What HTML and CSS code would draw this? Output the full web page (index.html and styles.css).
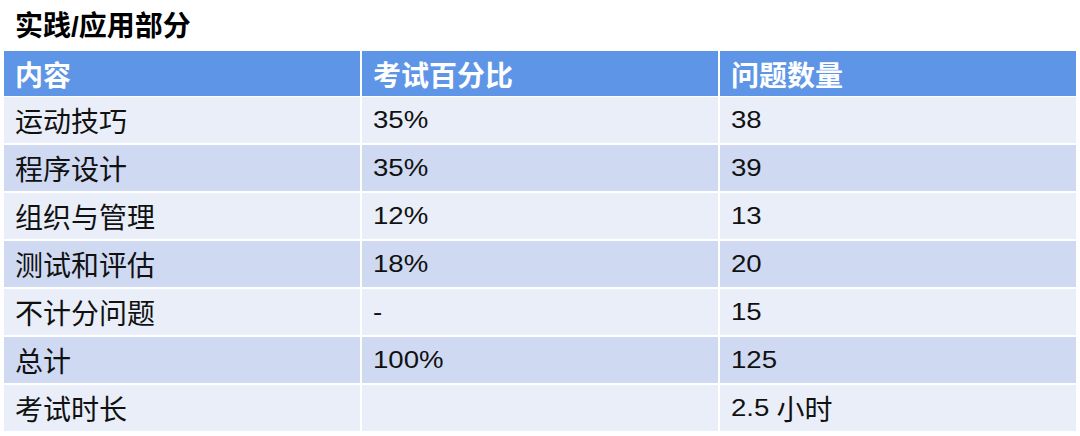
FILE: index.html
```html
<!DOCTYPE html>
<html lang="zh">
<head>
<meta charset="utf-8">
<link rel="stylesheet" href="styles.css">
</head>
<body>
<h1 class="title">实践<span class="slash">/</span>应用部分</h1>
<div class="table">
  <div class="cell head">内容</div>
  <div class="cell head">考试百分比</div>
  <div class="cell head">问题数量</div>

  <div class="cell odd">运动技巧</div>
  <div class="cell odd"><span class="lat">35%</span></div>
  <div class="cell odd"><span class="lat">38</span></div>

  <div class="cell even">程序设计</div>
  <div class="cell even"><span class="lat">35%</span></div>
  <div class="cell even"><span class="lat">39</span></div>

  <div class="cell odd">组织与管理</div>
  <div class="cell odd"><span class="lat">12%</span></div>
  <div class="cell odd"><span class="lat">13</span></div>

  <div class="cell even">测试和评估</div>
  <div class="cell even"><span class="lat">18%</span></div>
  <div class="cell even"><span class="lat">20</span></div>

  <div class="cell odd">不计分问题</div>
  <div class="cell odd"><span class="lat">-</span></div>
  <div class="cell odd"><span class="lat">15</span></div>

  <div class="cell even">总计</div>
  <div class="cell even"><span class="lat">100%</span></div>
  <div class="cell even"><span class="lat">125</span></div>

  <div class="cell odd">考试时长</div>
  <div class="cell odd"></div>
  <div class="cell odd"><span class="lat">2.5</span>小时</div>
</div>
</body>
</html>
```
FILE: styles.css
```css
html, body {
  margin: 0;
  padding: 0;
  background: #ffffff;
}
body {
  width: 1080px;
  height: 436px;
  overflow: hidden;
  font-family: "Liberation Sans", "Noto Sans CJK SC", sans-serif;
  color: #111111;
}
.title {
  margin: 0;
  padding: 6px 0 0 15px;
  height: 45px;
  box-sizing: border-box;
  font-family: "Noto Sans CJK SC", sans-serif;
  font-size: 28px;
  font-weight: 700;
  line-height: 36px;
  color: #000000;
}
.title .slash {
  font-family: "Liberation Sans", sans-serif;
  font-weight: 700;
}
.table {
  margin-left: 4px;
  width: 1072px;
  display: grid;
  grid-template-columns: 356px 356px 356px;
  grid-template-rows: 44px repeat(7, 46px);
  column-gap: 2px;
  row-gap: 2px;
  padding-top: 6px;
}
.cell {
  display: flex;
  align-items: center;
  padding-left: 11px;
  font-family: "Noto Sans CJK SC", sans-serif;
  font-size: 28px;
  line-height: 1;
  white-space: nowrap;
}
.head {
  background: #5e95e6;
  color: #ffffff;
  font-weight: 700;
  margin-bottom: -1px;
}
.odd {
  background: #e9eef9;
}
.even {
  background: #cfdaf2;
}
.lat {
  display: inline-block;
  font-family: "Liberation Sans", sans-serif;
  font-size: 24px;
  transform: scaleX(1.15);
  transform-origin: left center;
  margin-right: 12px;
}
```
